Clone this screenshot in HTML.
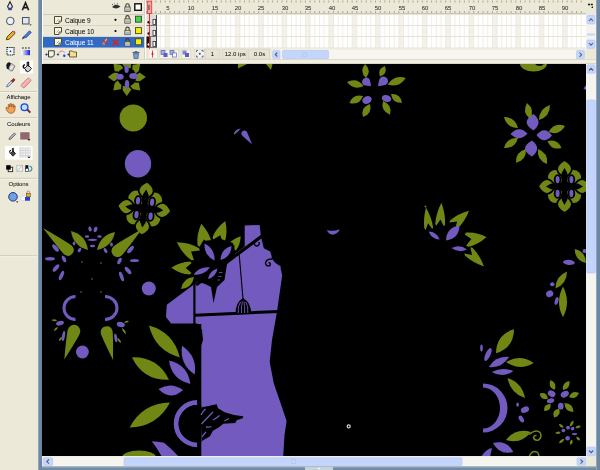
<!DOCTYPE html>
<html><head><meta charset="utf-8">
<style>
*{margin:0;padding:0;box-sizing:border-box}
.abs{will-change:transform}
html,body{width:600px;height:470px;overflow:hidden;background:#ECE9D8;font-family:"Liberation Sans",sans-serif;position:relative}
.abs{position:absolute}
#tools{left:0;top:0;width:38px;height:470px;background:#ECE9D8}
#vbarL{left:38px;top:0;width:4px;height:470px;background:#6B87A3;border-left:1px solid #8FA6BC}
#vbarR{left:596px;top:0;width:4px;height:470px;background:#6B87A3;border-left:1px solid #8FA6BC}
#tl{left:42px;top:0;width:554px;height:64px;background:#ECE9D8;border-left:1px solid #fff}
#stage{left:42px;top:64px;width:544px;height:392px;background:#000;overflow:hidden}
#vscroll{left:586px;top:64px;width:10px;height:392px;background:#F4F3EE}
#hscroll{left:42px;top:456px;width:554px;height:10px;background:#F4F3EE}
#bbar{left:42px;top:466px;width:554px;height:4px;background:#6B87A3}
.sep{height:1px;background:#C8C5B3;border-bottom:1px solid #fff}
.ln{font-size:6.6px;letter-spacing:-0.12px;line-height:10px;color:#000;white-space:nowrap}
.rn{top:4.5px;width:20px;text-align:center;font-size:6px;line-height:7px;color:#1a1a1a}
.tb{top:49px;height:10px;font-size:6px;line-height:10px;text-align:center;color:#000;white-space:nowrap}
.lbl{font-size:6px;letter-spacing:-0.12px;line-height:8px;color:#000;text-align:center;width:37px;left:0;white-space:nowrap}
</style></head><body>
<div class="abs" id="tools"></div>
<svg class="abs" style="left:0;top:0" width="38" height="470">
 <defs>
  <linearGradient id="gbl" x1="0" x2="1"><stop offset="0" stop-color="#fff"/><stop offset="1" stop-color="#1020D0"/></linearGradient>
  <pattern id="pgrid" width="2.5" height="2.5" patternUnits="userSpaceOnUse"><rect width="2.5" height="2.5" fill="#F4F4F4"/><path d="M0 0.5H2.5M0.5 0V2.5" stroke="#C9C9C9" stroke-width="0.6"/></pattern>
 </defs>
 <!-- row1 pen -->
 <path d="M10 1.8L12.4 6.5L11.6 8.3H8.4L7.6 6.5Z" fill="#E8E8F0" stroke="#1E1E2E" stroke-width="1.1"/>
 <rect x="8.2" y="8" width="3.6" height="2.2" fill="#3B3FA8"/>
 <!-- A -->
 <path d="M22.3 10.3L25.5 2.8L28.7 10.3M23.6 7.6H27.4" stroke="#1A1A1A" stroke-width="1.6" fill="none"/>
 <!-- oval -->
 <circle cx="10.3" cy="21" r="3.8" fill="#EAF0F8" stroke="#4A4F5A" stroke-width="1"/>
 <!-- rect -->
 <rect x="22.5" y="17.5" width="6.5" height="6.5" fill="#DCE8F6" stroke="#4A4F5A" stroke-width="1"/>
 <path d="M29.5 24.6H31.6L30.55 25.8Z" fill="#111"/>
 <!-- pencil -->
 <path d="M6.3 39.8L7 37L12.8 31.2L15 33.4L9.2 39.2Z" fill="#F0B526" stroke="#4A3208" stroke-width="0.9"/>
 <path d="M13 31.4L14 30.6L15.6 32.2L14.8 33.2Z" fill="#D9555A"/>
 <!-- brush -->
 <path d="M21.8 39.5L23 36.5L25 36.2L24.6 38.3Z" fill="#3B3B4A"/>
 <path d="M24.2 36.3L29.5 30.8L31.2 32.5L25.8 37.9Z" fill="#4B7EEA" stroke="#1E3A8A" stroke-width="0.8"/>
 <!-- free transform -->
 <rect x="7" y="47.5" width="7" height="7.5" fill="#EAF4FF" stroke="#111" stroke-width="1.1" stroke-dasharray="1.3 0.9"/>
 <circle cx="10.5" cy="51.2" r="0.8" fill="#111"/>
 <!-- fill transform -->
 <rect x="21.5" y="50" width="8.5" height="5.2" fill="url(#gbl)"/>
 <path d="M22 48H23.8M25 48H26.8M28 48H29.8" stroke="#222" stroke-width="1.2"/>
 <!-- ink bottle -->
 <path d="M6.3 65.5Q6.5 62.5 9.5 62.3L11 63.5L8.8 69.5L6.8 68.8Z" fill="#151515"/>
 <path d="M9 67L11.5 63.5L15 66L12.2 71Q10 71 9 69.5Z" fill="#D6D6D6" stroke="#5A5A5A" stroke-width="0.7"/>
 <path d="M10.5 68.5L12.2 66.5" stroke="#FFF" stroke-width="1"/>
 <!-- bucket selected -->
 <rect x="20" y="60.5" width="13" height="13" fill="#FFFFFF"/>
 <path d="M24.5 68.5L28 65L31.5 68.5L28 72Z" fill="#D0D0D0" stroke="#111" stroke-width="0.9"/>
 <path d="M27.2 66V62.5L28.6 62.2V66.5" stroke="#111" stroke-width="1.1" fill="none"/>
 <path d="M24.5 68.5C22.6 67 22.8 65.3 25 64.8" stroke="#111" stroke-width="1.5" fill="none"/>
 <path d="M25 70.5L28 72L31 69.5" stroke="#555" stroke-width="1" fill="none"/>
 <!-- eyedropper -->
 <path d="M6.6 87L7.3 84.7L11.8 80.2L13.3 81.7L8.8 86.2Z" fill="#BFD8F2" stroke="#3A5C8A" stroke-width="0.7"/>
 <path d="M11.2 80.8L13.6 78.4L15.1 79.9L12.7 82.3Z" fill="#B02828" stroke="#6E1010" stroke-width="0.6"/>
 <!-- eraser -->
 <path d="M21.6 84.4L27.4 78.6Q28.6 77.6 29.8 78.7L30.5 79.4Q31.4 80.6 30.4 81.6L24.6 87.4Q23.4 88.2 22.4 87.2L21.6 86.4Q20.8 85.4 21.6 84.4Z" fill="#F0A9AC" stroke="#C06D70" stroke-width="0.7"/>
 <path d="M22 86.5L30 78.5" stroke="#FFE0E0" stroke-width="0.6"/>
 <!-- separators -->
 <path d="M0 91.5H37" stroke="#CFCBB9" stroke-width="1"/><path d="M0 92.5H37" stroke="#FFFFFF" stroke-width="0.5"/>
 <path d="M0 117.7H37" stroke="#CFCBB9" stroke-width="1"/><path d="M0 118.7H37" stroke="#FFFFFF" stroke-width="0.5"/>
 <path d="M0 178.3H37" stroke="#CFCBB9" stroke-width="1"/><path d="M0 179.3H37" stroke="#FFFFFF" stroke-width="0.5"/>
 <path d="M0 255.7H37" stroke="#CFCBB9" stroke-width="1"/><path d="M0 256.7H37" stroke="#FFFFFF" stroke-width="0.5"/>
 <!-- hand -->
 <path d="M8 112Q5.5 109.5 6 107.5L7 107.3L8.3 108.7L8.2 104.8Q8.5 104 9.3 104.4L9.8 107L10.1 103.7Q10.9 103.1 11.5 103.8L11.7 107L12.5 104.2Q13.2 103.8 13.8 104.5L13.5 107.5L14.3 105.6Q15 105.4 15.3 106L14.8 110Q14.2 112.8 12 113.2H9.6Z" fill="#F3A352" stroke="#7A4010" stroke-width="0.6"/>
 <!-- zoom -->
 <path d="M27 109.3L30.3 112.6" stroke="#8E1E28" stroke-width="2"/>
 <circle cx="24.5" cy="107.3" r="3.4" fill="#B8DFFB" stroke="#1E46D0" stroke-width="1.3"/>
 <!-- stroke color -->
 <path d="M9 139.5L9.6 137.6L14.3 132.9L15.7 134.3L11 139Z" fill="#B8B8B8" stroke="#444" stroke-width="0.7"/>
 <rect x="19.5" y="131.5" width="10.8" height="8.8" fill="#F5F3EA"/>
 <rect x="20.2" y="132.2" width="9.4" height="7.4" fill="#8E6A6C"/>
 <path d="M27.5 139.3H30.5L29 140.8Z" fill="#000"/>
 <!-- fill area -->
 <rect x="5" y="146" width="27.5" height="13.6" fill="#FFFFFF"/>
 <path d="M10.5 153.5L13 151L15.6 153.5L13 156.2Z" fill="#444" stroke="#111" stroke-width="0.8"/>
 <path d="M12.4 151.5V148.5L13.4 148.2V152" stroke="#111" stroke-width="0.9" fill="none"/>
 <path d="M10.5 153.5C9.2 152 9.5 150.6 11 150.3" stroke="#111" stroke-width="1.1" fill="none"/>
 <rect x="19.5" y="147.5" width="11" height="10" fill="url(#pgrid)" stroke="#E5E5E5" stroke-width="0.6"/>
 <path d="M27.5 156.8H30.5L29 158.3Z" fill="#000"/>
 <!-- small icons -->
 <rect x="8.2" y="167.2" width="4.5" height="4.5" fill="#fff" stroke="#111" stroke-width="0.8"/>
 <rect x="6.2" y="165.2" width="4.5" height="4.5" fill="#000"/>
 <rect x="16.8" y="165.3" width="5.6" height="6" fill="#F2F2F2" stroke="#AFAFAF" stroke-width="0.7"/>
 <path d="M17 171.2L22.2 165.5" stroke="#AFAFAF" stroke-width="0.7"/>
 <rect x="25.3" y="165.2" width="3" height="3" fill="#111"/>
 <rect x="25.3" y="168.5" width="3" height="3" fill="#fff" stroke="#111" stroke-width="0.6"/>
 <path d="M29.5 166.3Q32.3 166.5 31.8 169.5Q31 171.6 28.8 171.2" stroke="#2488B8" stroke-width="1.1" fill="none"/>
 <!-- options -->
 <circle cx="13" cy="196.8" r="4.3" fill="#6FA0E6" stroke="#1F2F80" stroke-width="1"/>
 <path d="M16 201.5H18.4L17.2 202.8Z" fill="#000"/>
 <rect x="21" y="196" width="6.5" height="4.5" fill="#F8F8FF" stroke="#C8D0E8" stroke-width="0.6"/>
 <rect x="25" y="197" width="5" height="3.7" fill="#2340D0"/>
 <rect x="26.3" y="193.3" width="4" height="3.5" fill="#F2B020" stroke="#6A5020" stroke-width="0.6"/>
 <path d="M27 193.3V192.3A1.3 1.3 0 0 1 29.6 192.3V193.3" stroke="#777" stroke-width="0.7" fill="none"/>
</svg>
<div class="abs lbl" style="top:92.6px">Affichage</div>
<div class="abs lbl" style="top:120.2px">Couleurs</div>
<div class="abs lbl" style="top:180.2px">Options</div>

<div class="abs" id="vbarL"></div>
<div class="abs" id="tl"></div>

<!-- TIMELINE -->
<div class="abs" style="left:43px;top:0;width:101px;height:14px;background:#ECE9D8"></div>
<div class="abs" style="left:43px;top:14px;width:101px;height:1px;background:#CFCBB8"></div>
<div class="abs" style="left:43px;top:25px;width:101px;height:1px;background:#D9D5C3"></div>
<div class="abs" style="left:43px;top:36px;width:101px;height:1px;background:#D9D5C3"></div>
<div class="abs" style="left:43px;top:37px;width:101px;height:10.5px;background:#316AC5"></div>
<div class="abs" style="left:43px;top:47.5px;width:101px;height:1px;background:#D9D5C3"></div>
<div class="abs" style="left:144px;top:0;width:1px;height:61px;background:#D4D0BE"></div>
<div class="abs" style="left:145px;top:0;width:1px;height:61px;background:#fff"></div>
<!-- layer names -->
<svg class="abs" style="left:0;top:0" width="600" height="64">
 <defs>
  <g id="lic"><path d="M0.5 0.5H7.5V5L5 7.5H0.5Z" fill="#F7F5E3" stroke="#4B4A35" stroke-width="1"/><path d="M7.5 5H5V7.5" fill="#D8D4B0" stroke="#4B4A35" stroke-width="0.8"/><path d="M2.5 5.5L5 3" stroke="#9F9C7C" stroke-width="0.8"/></g>
  <g id="lock"><path d="M1.8 3.8V2.3A1.7 1.7 0 0 1 5.2 2.3V3.8" fill="none" stroke="#3A3A3A" stroke-width="1.1"/><rect x="0.8" y="3.8" width="5.4" height="4.4" fill="#E8D890" stroke="#4A4A4A" stroke-width="0.8"/><rect x="1.4" y="5.6" width="4.2" height="2.2" fill="#9DB4D8"/></g>
 </defs>
 <use href="#lic" x="54" y="16"/>
 <use href="#lic" x="54" y="27"/>
 <use href="#lic" x="54" y="38"/>
 <!-- eye -->
 <path d="M112 7Q116 3 120.5 6.5Q116 10 112 7Z" fill="#333"/><path d="M113 5L112 4M115 4.5L114.5 3.5M117.5 4.3L117.5 3.3" stroke="#333" stroke-width="0.8"/>
 <use href="#lock" x="124" y="3.2"/>
 <rect x="134.8" y="3.8" width="6.5" height="6.5" fill="#fff" stroke="#111" stroke-width="1.4"/>
 <circle cx="115.5" cy="19.8" r="1.1" fill="#000"/>
 <circle cx="115.5" cy="31" r="1.1" fill="#000"/>
 <use href="#lock" x="124" y="15"/>
 <use href="#lock" x="124" y="26.5"/>
 <use href="#lock" x="124" y="38"/>
 <rect x="135.5" y="16.2" width="6" height="6" fill="#44D544" stroke="#2F4A2F" stroke-width="0.9"/>
 <rect x="135.5" y="27.6" width="6" height="6" fill="#F4F000" stroke="#4A4A1F" stroke-width="0.9"/>
 <rect x="135.5" y="38.8" width="6" height="6" fill="#F4F000" stroke="#4A4A1F" stroke-width="0.9"/>
 <!-- pencil crossed -->
 <path d="M103 45L107 39" stroke="#E6C060" stroke-width="2"/><path d="M102.5 39.5L108 45M103 45L108 39" stroke="#E02020" stroke-width="1"/>
 <path d="M112.5 39.5L118.5 45.5M118.5 39.5L112.5 45.5" stroke="#E81818" stroke-width="1.4"/>
 <!-- bottom icons -->
 <path d="M48.5 50.8H54.3V55L52.5 57H48.5Z" fill="#F4F2E0" stroke="#3F3E2C" stroke-width="1"/><path d="M46.5 53.3L48 54.5L46.5 55.7L45 54.5Z" fill="#2838B0"/>
 <path d="M59 52.5Q61.5 49.8 64.5 52.3" stroke="#F02020" stroke-width="0.9" stroke-dasharray="0.9 0.5" fill="none"/><path d="M58 53.3L59.4 54.5L58 55.8L56.6 54.5Z" fill="#2838B0"/><circle cx="64.3" cy="55.8" r="1.2" fill="#1A3FE0"/>
 <path d="M69.5 51H72.5L73.5 52H76.5V57H69.5Z" fill="#F4DE8A" stroke="#5D5130" stroke-width="0.9"/><path d="M68.5 53.3L70 54.5L68.5 55.7L67 54.5Z" fill="#2838B0"/>
 <!-- trash -->
 <path d="M132.5 52.5H139.5" stroke="#4E6A8C" stroke-width="1.2"/><path d="M133.5 53.5H138.5L138 58.5H134Z" fill="#7F9CC3" stroke="#4E6A8C" stroke-width="0.8"/><rect x="134.8" y="51" width="2.4" height="1.2" fill="#4E6A8C"/>
 <!-- timeline ruler/grid -->
 <rect x="146" y="0" width="440" height="14" fill="#ECE9D8"/>
 <rect x="146" y="14" width="440" height="34.5" fill="#FFFFFF"/>
<rect x="165.16" y="14.5" width="4.67" height="33.5" fill="#F3F1E9"/>
<rect x="188.54" y="14.5" width="4.67" height="33.5" fill="#F3F1E9"/>
<rect x="211.91" y="14.5" width="4.67" height="33.5" fill="#F3F1E9"/>
<rect x="235.29" y="14.5" width="4.67" height="33.5" fill="#F3F1E9"/>
<rect x="258.66" y="14.5" width="4.67" height="33.5" fill="#F3F1E9"/>
<rect x="282.04" y="14.5" width="4.67" height="33.5" fill="#F3F1E9"/>
<rect x="305.41" y="14.5" width="4.67" height="33.5" fill="#F3F1E9"/>
<rect x="328.79" y="14.5" width="4.67" height="33.5" fill="#F3F1E9"/>
<rect x="352.16" y="14.5" width="4.67" height="33.5" fill="#F3F1E9"/>
<rect x="375.54" y="14.5" width="4.67" height="33.5" fill="#F3F1E9"/>
<rect x="398.91" y="14.5" width="4.67" height="33.5" fill="#F3F1E9"/>
<rect x="422.29" y="14.5" width="4.67" height="33.5" fill="#F3F1E9"/>
<rect x="445.66" y="14.5" width="4.67" height="33.5" fill="#F3F1E9"/>
<rect x="469.04" y="14.5" width="4.67" height="33.5" fill="#F3F1E9"/>
<rect x="492.41" y="14.5" width="4.67" height="33.5" fill="#F3F1E9"/>
<rect x="515.79" y="14.5" width="4.67" height="33.5" fill="#F3F1E9"/>
<rect x="539.16" y="14.5" width="4.67" height="33.5" fill="#F3F1E9"/>
<rect x="562.54" y="14.5" width="4.67" height="33.5" fill="#F3F1E9"/>
<path d="M151.14 14.5V48M155.81 14.5V48M160.49 14.5V48M165.16 14.5V48M169.84 14.5V48M174.51 14.5V48M179.19 14.5V48M183.86 14.5V48M188.54 14.5V48M193.21 14.5V48M197.89 14.5V48M202.56 14.5V48M207.24 14.5V48M211.91 14.5V48M216.59 14.5V48M221.26 14.5V48M225.94 14.5V48M230.61 14.5V48M235.29 14.5V48M239.96 14.5V48M244.64 14.5V48M249.31 14.5V48M253.99 14.5V48M258.66 14.5V48M263.34 14.5V48M268.01 14.5V48M272.69 14.5V48M277.36 14.5V48M282.04 14.5V48M286.71 14.5V48M291.39 14.5V48M296.06 14.5V48M300.74 14.5V48M305.41 14.5V48M310.09 14.5V48M314.76 14.5V48M319.44 14.5V48M324.11 14.5V48M328.79 14.5V48M333.46 14.5V48M338.14 14.5V48M342.81 14.5V48M347.49 14.5V48M352.16 14.5V48M356.84 14.5V48M361.51 14.5V48M366.19 14.5V48M370.86 14.5V48M375.54 14.5V48M380.21 14.5V48M384.89 14.5V48M389.56 14.5V48M394.24 14.5V48M398.91 14.5V48M403.59 14.5V48M408.26 14.5V48M412.94 14.5V48M417.61 14.5V48M422.29 14.5V48M426.96 14.5V48M431.64 14.5V48M436.31 14.5V48M440.99 14.5V48M445.66 14.5V48M450.34 14.5V48M455.01 14.5V48M459.69 14.5V48M464.36 14.5V48M469.04 14.5V48M473.71 14.5V48M478.39 14.5V48M483.06 14.5V48M487.74 14.5V48M492.41 14.5V48M497.09 14.5V48M501.76 14.5V48M506.44 14.5V48M511.11 14.5V48M515.79 14.5V48M520.46 14.5V48M525.14 14.5V48M529.81 14.5V48M534.49 14.5V48M539.16 14.5V48M543.84 14.5V48M548.51 14.5V48M553.19 14.5V48M557.86 14.5V48M562.54 14.5V48M567.21 14.5V48M571.89 14.5V48M576.56 14.5V48M581.24 14.5V48" stroke="#E9E7DA" stroke-width="0.7" fill="none"/>
<path d="M146.46 0.5V2.5M146.46 11V13M151.14 0.5V2.5M151.14 11V13M155.81 0.5V2.5M155.81 11V13M160.49 0.5V2.5M160.49 11V13M165.16 0.5V2.5M165.16 11V13M169.84 0.5V2.5M169.84 11V13M174.51 0.5V2.5M174.51 11V13M179.19 0.5V2.5M179.19 11V13M183.86 0.5V2.5M183.86 11V13M188.54 0.5V2.5M188.54 11V13M193.21 0.5V2.5M193.21 11V13M197.89 0.5V2.5M197.89 11V13M202.56 0.5V2.5M202.56 11V13M207.24 0.5V2.5M207.24 11V13M211.91 0.5V2.5M211.91 11V13M216.59 0.5V2.5M216.59 11V13M221.26 0.5V2.5M221.26 11V13M225.94 0.5V2.5M225.94 11V13M230.61 0.5V2.5M230.61 11V13M235.29 0.5V2.5M235.29 11V13M239.96 0.5V2.5M239.96 11V13M244.64 0.5V2.5M244.64 11V13M249.31 0.5V2.5M249.31 11V13M253.99 0.5V2.5M253.99 11V13M258.66 0.5V2.5M258.66 11V13M263.34 0.5V2.5M263.34 11V13M268.01 0.5V2.5M268.01 11V13M272.69 0.5V2.5M272.69 11V13M277.36 0.5V2.5M277.36 11V13M282.04 0.5V2.5M282.04 11V13M286.71 0.5V2.5M286.71 11V13M291.39 0.5V2.5M291.39 11V13M296.06 0.5V2.5M296.06 11V13M300.74 0.5V2.5M300.74 11V13M305.41 0.5V2.5M305.41 11V13M310.09 0.5V2.5M310.09 11V13M314.76 0.5V2.5M314.76 11V13M319.44 0.5V2.5M319.44 11V13M324.11 0.5V2.5M324.11 11V13M328.79 0.5V2.5M328.79 11V13M333.46 0.5V2.5M333.46 11V13M338.14 0.5V2.5M338.14 11V13M342.81 0.5V2.5M342.81 11V13M347.49 0.5V2.5M347.49 11V13M352.16 0.5V2.5M352.16 11V13M356.84 0.5V2.5M356.84 11V13M361.51 0.5V2.5M361.51 11V13M366.19 0.5V2.5M366.19 11V13M370.86 0.5V2.5M370.86 11V13M375.54 0.5V2.5M375.54 11V13M380.21 0.5V2.5M380.21 11V13M384.89 0.5V2.5M384.89 11V13M389.56 0.5V2.5M389.56 11V13M394.24 0.5V2.5M394.24 11V13M398.91 0.5V2.5M398.91 11V13M403.59 0.5V2.5M403.59 11V13M408.26 0.5V2.5M408.26 11V13M412.94 0.5V2.5M412.94 11V13M417.61 0.5V2.5M417.61 11V13M422.29 0.5V2.5M422.29 11V13M426.96 0.5V2.5M426.96 11V13M431.64 0.5V2.5M431.64 11V13M436.31 0.5V2.5M436.31 11V13M440.99 0.5V2.5M440.99 11V13M445.66 0.5V2.5M445.66 11V13M450.34 0.5V2.5M450.34 11V13M455.01 0.5V2.5M455.01 11V13M459.69 0.5V2.5M459.69 11V13M464.36 0.5V2.5M464.36 11V13M469.04 0.5V2.5M469.04 11V13M473.71 0.5V2.5M473.71 11V13M478.39 0.5V2.5M478.39 11V13M483.06 0.5V2.5M483.06 11V13M487.74 0.5V2.5M487.74 11V13M492.41 0.5V2.5M492.41 11V13M497.09 0.5V2.5M497.09 11V13M501.76 0.5V2.5M501.76 11V13M506.44 0.5V2.5M506.44 11V13M511.11 0.5V2.5M511.11 11V13M515.79 0.5V2.5M515.79 11V13M520.46 0.5V2.5M520.46 11V13M525.14 0.5V2.5M525.14 11V13M529.81 0.5V2.5M529.81 11V13M534.49 0.5V2.5M534.49 11V13M539.16 0.5V2.5M539.16 11V13M543.84 0.5V2.5M543.84 11V13M548.51 0.5V2.5M548.51 11V13M553.19 0.5V2.5M553.19 11V13M557.86 0.5V2.5M557.86 11V13M562.54 0.5V2.5M562.54 11V13M567.21 0.5V2.5M567.21 11V13M571.89 0.5V2.5M571.89 11V13M576.56 0.5V2.5M576.56 11V13M581.24 0.5V2.5M581.24 11V13" stroke="#A9A693" stroke-width="1" fill="none"/>
 <path d="M146 14.5H586M146 25.5H586M146 36.5H586M146 48H586" stroke="#E6E3D4" stroke-width="1"/>
 <path d="M146 13.5H586" stroke="#C9C6B2" stroke-width="1"/>
 <!-- frame 1 cells -->
 <rect x="146.5" y="15" width="10" height="10.5" fill="#DCDCDC"/>
 <rect x="146.5" y="26" width="10" height="10.5" fill="#DCDCDC"/>
 <rect x="146.5" y="37" width="10" height="10.5" fill="#DCDCDC"/>
 <rect x="146.5" y="37" width="4" height="10.5" fill="#111"/>
 <path d="M156.5 15V47.5" stroke="#333" stroke-width="0.9"/>
 <path d="M146.5 25.5H156.5M146.5 36.5H156.5M146.5 47.5H156.5" stroke="#555" stroke-width="0.8"/>
 <rect x="153" y="19.5" width="2.6" height="5" fill="#fff" stroke="#333" stroke-width="0.8"/>
 <rect x="153" y="30.5" width="2.6" height="5" fill="#fff" stroke="#333" stroke-width="0.8"/>
 <rect x="153" y="41.5" width="2.6" height="5" fill="#fff" stroke="#333" stroke-width="0.8"/>
 <circle cx="148.8" cy="22.3" r="1.3" fill="#000"/>
 <circle cx="148.8" cy="33.5" r="1.3" fill="#000"/>
 <circle cx="148.8" cy="44.5" r="1.3" fill="#fff"/>
 <!-- playhead -->
 <rect x="147.3" y="1.2" width="4.4" height="12.3" fill="#F7A3A3" stroke="#E23B3B" stroke-width="0.9"/>
 <path d="M149.5 13.5V49.5" stroke="#E81A1A" stroke-width="0.9"/>
 <path d="M149 5V10" stroke="#333" stroke-width="0.9"/>
 <!-- timeline right scrollbar -->
 <rect x="586" y="14" width="10" height="35" fill="#F4F3EE"/>
 <rect x="587" y="15" width="8" height="9" rx="1" fill="#C6D6FA" stroke="#B2C6F2" stroke-width="0.6"/>
 <path d="M589 21L591 18.8L593 21" stroke="#4D6185" stroke-width="1.1" fill="none"/>
 <rect x="587" y="33.5" width="8" height="2" fill="#C6D6FA"/>
 <rect x="587" y="40" width="8" height="8.5" rx="1" fill="#C6D6FA" stroke="#B2C6F2" stroke-width="0.6"/>
 <path d="M589 43L591 45.2L593 43" stroke="#4D6185" stroke-width="1.1" fill="none"/>
 <!-- frame-rate icon top right -->
 <path d="M588 4.5H590M590.8 4.5H592.8" stroke="#111" stroke-width="1.3"/><path d="M593 8L591 8L593 6Z" fill="#111"/>
 <!-- bottom bar buttons -->
 <rect x="148" y="49" width="9.5" height="9.5" fill="#F6F5EF" stroke="#D6D2C0" stroke-width="0.6"/>
 <rect x="159.8" y="49.2" width="19" height="9.3" fill="#F3F2EB" stroke="#D6D2C0" stroke-width="0.6"/>
 <rect x="181.2" y="49.2" width="9.6" height="9.3" fill="#F3F2EB" stroke="#D6D2C0" stroke-width="0.6"/>
 <rect x="194.8" y="49.2" width="9.6" height="9.3" fill="#F3F2EB" stroke="#D6D2C0" stroke-width="0.6"/>
 <path d="M152.5 50.5V57.5" stroke="#E81A1A" stroke-width="0.8"/><path d="M152.5 52.3L153.7 54L152.5 55.7L151.3 54Z" fill="#E81A1A"/>
 <rect x="161" y="50.5" width="4" height="4" fill="#A8ACE0" stroke="#5B60B8" stroke-width="0.7"/><rect x="163.5" y="53" width="4" height="4" fill="#5B60B8"/>
 <rect x="170" y="50.5" width="4" height="4" fill="#A8ACE0" stroke="#5B60B8" stroke-width="0.7"/><rect x="172.5" y="53" width="4" height="4" fill="#fff" stroke="#5B60B8" stroke-width="0.7"/>
 <rect x="182.5" y="50.5" width="4" height="4" fill="#7E84D2"/><rect x="185" y="53" width="4" height="4" fill="#5B60B8"/>
 <path d="M196.5 52V50.5H198M201.5 50.5H203V52M203 55.5V57H201.5M198 57H196.5V55.5" stroke="#4C5190" stroke-width="0.9" fill="none"/><circle cx="199.8" cy="53.8" r="1" fill="#4C5190"/>
 <rect x="205" y="49" width="15" height="10" fill="#E7E4D5" stroke="#D2CEBB" stroke-width="0.6"/>
 <rect x="222.5" y="49" width="24.5" height="10" fill="#E7E4D5" stroke="#D2CEBB" stroke-width="0.6"/>
 <rect x="248.7" y="49" width="21" height="10" fill="#E7E4D5" stroke="#D2CEBB" stroke-width="0.6"/>
 <!-- h scroll -->
 <rect x="271.5" y="49.5" width="314" height="10" fill="#F6F5F0"/>
 <rect x="272.5" y="50.5" width="7.5" height="8" rx="1" fill="#C6D6FA" stroke="#B2C6F2" stroke-width="0.6"/>
 <path d="M277.3 52.5L275.3 54.5L277.3 56.5" stroke="#4D6185" stroke-width="1.1" fill="none"/>
 <rect x="282.5" y="50.5" width="46" height="8" rx="1" fill="#C3D5FC" stroke="#B0C5F5" stroke-width="0.6"/>
 <rect x="303" y="52.8" width="3.5" height="3.5" fill="none" stroke="#AFC3EE" stroke-width="0.6"/>
 <rect x="576.5" y="50.5" width="8" height="8.5" rx="1" fill="#C6D6FA" stroke="#B2C6F2" stroke-width="0.6"/>
 <path d="M579.5 52.5L581.5 54.7L579.5 57" stroke="#4D6185" stroke-width="1.1" fill="none"/>
 <path d="M43 48H144" stroke="#F8F7F0" stroke-width="0.8"/><path d="M43 59.6H596" stroke="#DCD8C6" stroke-width="1"/><rect x="43" y="60.2" width="553" height="2.8" fill="#F1EFE3"/>
 <path d="M43 63.5H596" stroke="#D9D5C2" stroke-width="1"/>
</svg>
<div class="abs ln" style="left:65px;top:15.5px">Calque 9</div>
<div class="abs ln" style="left:65px;top:26.5px">Calque 10</div>
<div class="abs ln" style="left:65px;top:37.5px;color:#fff">Calque 11</div>
<div class="abs rn" style="left:157.9px">5</div>
<div class="abs rn" style="left:181.3px">10</div>
<div class="abs rn" style="left:204.6px">15</div>
<div class="abs rn" style="left:228.0px">20</div>
<div class="abs rn" style="left:251.4px">25</div>
<div class="abs rn" style="left:274.8px">30</div>
<div class="abs rn" style="left:298.2px">35</div>
<div class="abs rn" style="left:321.5px">40</div>
<div class="abs rn" style="left:344.9px">45</div>
<div class="abs rn" style="left:368.3px">50</div>
<div class="abs rn" style="left:391.7px">55</div>
<div class="abs rn" style="left:415.0px">60</div>
<div class="abs rn" style="left:438.4px">65</div>
<div class="abs rn" style="left:461.8px">70</div>
<div class="abs rn" style="left:485.2px">75</div>
<div class="abs rn" style="left:508.5px">80</div>
<div class="abs rn" style="left:531.9px">85</div>
<div class="abs rn" style="left:555.3px">90</div>
<div class="abs tb" style="left:205px;width:15px">1</div>
<div class="abs tb" style="left:222.5px;width:24.5px">12.0 ips</div>
<div class="abs tb" style="left:248.7px;width:21px">0.0s</div>

<div class="abs" id="stage"></div>
<!--ART--><svg class="abs" style="left:0;top:0" width="600" height="470" viewBox="0 0 600 470"><defs><clipPath id="stc"><rect x="42" y="64" width="544" height="392"/></clipPath></defs><g clip-path="url(#stc)"><path d="M145.8 77.0 L138.8 82.0 L140.2 90.4 L131.8 89.0 L126.8 96.0 L121.8 89.0 L113.4 90.4 L114.8 82.0 L107.8 77.0 L114.8 72.0 L113.4 63.6 L121.8 65.0 L126.8 58.0 L131.8 65.0 L140.2 63.6 L138.8 72.0Z" fill="#718715"/><circle cx="126.8" cy="77" r="9.5" fill="#000"/><path d="M133.4 81.5L140.9 82.2" stroke="#000" stroke-width="1.6"/><path d="M128.3 84.9L133.1 90.6" stroke="#000" stroke-width="1.6"/><path d="M122.3 83.6L121.6 91.1" stroke="#000" stroke-width="1.6"/><path d="M118.9 78.5L113.2 83.3" stroke="#000" stroke-width="1.6"/><path d="M120.2 72.5L112.7 71.8" stroke="#000" stroke-width="1.6"/><path d="M125.3 69.1L120.5 63.4" stroke="#000" stroke-width="1.6"/><path d="M131.3 70.4L132.0 62.9" stroke="#000" stroke-width="1.6"/><path d="M134.7 75.5L140.4 70.7" stroke="#000" stroke-width="1.6"/><ellipse cx="126.6" cy="69.0" rx="2.2" ry="3.9" transform="rotate(0 126.6 69.0)" fill="#735ABF"/><ellipse cx="119.8" cy="76.7" rx="3.9" ry="3.0" transform="rotate(0 119.8 76.7)" fill="#735ABF"/><ellipse cx="133.6" cy="76.0" rx="4.4" ry="3.0" transform="rotate(0 133.6 76.0)" fill="#735ABF"/><ellipse cx="127.0" cy="84.3" rx="2.2" ry="4.4" transform="rotate(0 127.0 84.3)" fill="#735ABF"/><ellipse cx="133.3" cy="117.9" rx="13.7" ry="13.5" transform="rotate(0 133.3 117.9)" fill="#718715"/><ellipse cx="138.0" cy="163.8" rx="13.2" ry="13.7" transform="rotate(0 138.0 163.8)" fill="#735ABF"/><circle cx="154.4" cy="200.3" r="7.8" fill="#718715"/><circle cx="152.5" cy="218.6" r="7.8" fill="#718715"/><circle cx="134.2" cy="216.7" r="7.8" fill="#718715"/><circle cx="136.1" cy="198.4" r="7.8" fill="#718715"/><path d="M145.2 199.5Q161.1 192.2 147.1 181.6Q131.3 189.0 145.2 199.5Z" fill="#718715" stroke="#000" stroke-width="1.8"/><path d="M153.3 209.4Q160.6 225.3 171.2 211.3Q163.8 195.5 153.3 209.4Z" fill="#718715" stroke="#000" stroke-width="1.8"/><path d="M143.4 217.5Q127.5 224.8 141.5 235.4Q157.3 228.0 143.4 217.5Z" fill="#718715" stroke="#000" stroke-width="1.8"/><path d="M135.3 207.6Q128.0 191.7 117.4 205.7Q124.8 221.5 135.3 207.6Z" fill="#718715" stroke="#000" stroke-width="1.8"/><path d="M144.3 208.5Q152.3 199.8 146.3 189.6Q138.3 198.3 144.3 208.5Z" fill="#000"/><path d="M144.3 208.5Q153.0 216.5 163.2 210.5Q154.5 202.5 144.3 208.5Z" fill="#000"/><path d="M144.3 208.5Q136.3 217.2 142.3 227.4Q150.3 218.7 144.3 208.5Z" fill="#000"/><path d="M144.3 208.5Q135.6 200.5 125.4 206.5Q134.1 214.5 144.3 208.5Z" fill="#000"/><circle cx="144.3" cy="208.5" r="5.5" fill="#000"/><ellipse cx="152.1" cy="202.2" rx="3.0" ry="4.6" transform="rotate(6 152.1 202.2)" fill="#735ABF" stroke="#000" stroke-width="1.8"/><ellipse cx="150.6" cy="216.3" rx="3.0" ry="4.6" transform="rotate(6 150.6 216.3)" fill="#735ABF" stroke="#000" stroke-width="1.8"/><ellipse cx="136.5" cy="214.8" rx="3.0" ry="4.6" transform="rotate(6 136.5 214.8)" fill="#735ABF" stroke="#000" stroke-width="1.8"/><ellipse cx="138.0" cy="200.7" rx="3.0" ry="4.6" transform="rotate(6 138.0 200.7)" fill="#735ABF" stroke="#000" stroke-width="1.8"/><circle cx="573.5" cy="177.5" r="7.6" fill="#718715"/><circle cx="573.5" cy="195.5" r="7.6" fill="#718715"/><circle cx="555.5" cy="195.5" r="7.6" fill="#718715"/><circle cx="555.5" cy="177.5" r="7.6" fill="#718715"/><path d="M564.5 177.7Q579.2 168.9 564.5 160.0Q549.8 168.9 564.5 177.7Z" fill="#718715" stroke="#000" stroke-width="1.8"/><path d="M573.3 186.5Q582.1 201.2 591.0 186.5Q582.1 171.8 573.3 186.5Z" fill="#718715" stroke="#000" stroke-width="1.8"/><path d="M564.5 195.3Q549.8 204.1 564.5 213.0Q579.2 204.1 564.5 195.3Z" fill="#718715" stroke="#000" stroke-width="1.8"/><path d="M555.7 186.5Q546.9 171.8 538.0 186.5Q546.9 201.2 555.7 186.5Z" fill="#718715" stroke="#000" stroke-width="1.8"/><path d="M564.5 186.5Q571.4 177.2 564.5 167.9Q557.6 177.2 564.5 186.5Z" fill="#000"/><path d="M564.5 186.5Q573.8 193.4 583.1 186.5Q573.8 179.6 564.5 186.5Z" fill="#000"/><path d="M564.5 186.5Q557.6 195.8 564.5 205.1Q571.4 195.8 564.5 186.5Z" fill="#000"/><path d="M564.5 186.5Q555.2 179.6 545.9 186.5Q555.2 193.4 564.5 186.5Z" fill="#000"/><circle cx="564.5" cy="186.5" r="5.4" fill="#000"/><ellipse cx="571.4" cy="179.6" rx="2.9" ry="4.5" transform="rotate(0 571.4 179.6)" fill="#735ABF" stroke="#000" stroke-width="1.8"/><ellipse cx="571.4" cy="193.4" rx="2.9" ry="4.5" transform="rotate(0 571.4 193.4)" fill="#735ABF" stroke="#000" stroke-width="1.8"/><ellipse cx="557.6" cy="193.4" rx="2.9" ry="4.5" transform="rotate(0 557.6 193.4)" fill="#735ABF" stroke="#000" stroke-width="1.8"/><ellipse cx="557.6" cy="179.6" rx="2.9" ry="4.5" transform="rotate(0 557.6 179.6)" fill="#735ABF" stroke="#000" stroke-width="1.8"/><path d="M43.0 228.0Q63.0 254.1 64.7 254.8A5.8 5.8 0 0 0 72.3 246.2Q71.4 244.6 43.0 228.0Z" fill="#718715"/><path d="M71.0 231.0Q73.2 246.2 88.0 250.0Q85.8 234.8 71.0 231.0Z" fill="#718715"/><path d="M115.0 232.0Q100.0 235.0 97.0 250.0Q112.0 247.0 115.0 232.0Z" fill="#718715"/><path d="M142.0 229.0Q114.4 244.9 113.5 246.5A6.0 6.0 0 0 0 121.5 255.5Q123.2 254.7 142.0 229.0Z" fill="#718715"/><ellipse cx="50.0" cy="258.8" rx="5.0" ry="1.8" transform="rotate(0 50.0 258.8)" fill="#735ABF"/><ellipse cx="55.5" cy="248.0" rx="2.0" ry="4.5" transform="rotate(-40 55.5 248.0)" fill="#735ABF"/><ellipse cx="56.0" cy="268.0" rx="2.0" ry="4.5" transform="rotate(40 56.0 268.0)" fill="#735ABF"/><ellipse cx="61.5" cy="275.5" rx="1.8" ry="5.0" transform="rotate(25 61.5 275.5)" fill="#735ABF"/><ellipse cx="64.0" cy="259.0" rx="1.8" ry="3.5" transform="rotate(-25 64.0 259.0)" fill="#735ABF"/><ellipse cx="74.0" cy="243.5" rx="1.3" ry="2.0" transform="rotate(0 74.0 243.5)" fill="#735ABF"/><ellipse cx="79.5" cy="250.0" rx="1.5" ry="2.5" transform="rotate(30 79.5 250.0)" fill="#735ABF"/><ellipse cx="90.0" cy="229.0" rx="1.6" ry="2.6" transform="rotate(-15 90.0 229.0)" fill="#735ABF"/><ellipse cx="95.5" cy="229.5" rx="1.8" ry="2.8" transform="rotate(20 95.5 229.5)" fill="#735ABF"/><ellipse cx="87.0" cy="236.5" rx="2.2" ry="1.3" transform="rotate(0 87.0 236.5)" fill="#735ABF"/><ellipse cx="99.5" cy="236.5" rx="2.2" ry="1.3" transform="rotate(0 99.5 236.5)" fill="#735ABF"/><path d="M87 240Q92.5 237.5 98 240Q92.5 242 87 240Z" fill="#735ABF"/><ellipse cx="92.5" cy="246.0" rx="2.6" ry="1.2" transform="rotate(0 92.5 246.0)" fill="#735ABF"/><ellipse cx="105.5" cy="250.5" rx="1.5" ry="2.8" transform="rotate(-30 105.5 250.5)" fill="#735ABF"/><ellipse cx="111.5" cy="244.5" rx="1.4" ry="2.0" transform="rotate(0 111.5 244.5)" fill="#735ABF"/><ellipse cx="119.5" cy="261.0" rx="1.8" ry="3.5" transform="rotate(25 119.5 261.0)" fill="#735ABF"/><ellipse cx="130.5" cy="249.5" rx="2.0" ry="4.5" transform="rotate(40 130.5 249.5)" fill="#735ABF"/><ellipse cx="134.5" cy="260.5" rx="4.5" ry="1.5" transform="rotate(0 134.5 260.5)" fill="#735ABF"/><ellipse cx="128.0" cy="270.5" rx="2.0" ry="4.5" transform="rotate(-40 128.0 270.5)" fill="#735ABF"/><ellipse cx="121.5" cy="276.5" rx="1.8" ry="5.0" transform="rotate(-20 121.5 276.5)" fill="#735ABF"/><circle cx="82" cy="262" r="0.8" fill="#718715"/><circle cx="101" cy="263" r="0.8" fill="#718715"/><circle cx="92" cy="279" r="0.8" fill="#718715"/><circle cx="81" cy="292" r="0.8" fill="#718715"/><circle cx="101" cy="292" r="0.8" fill="#718715"/><path d="M75.5 296.5A11.5 11.5 0 0 0 75.5 319.5" stroke="#735ABF" stroke-width="3" fill="none"/><path d="M105 296.5A12 11.5 0 0 1 105 319.5" stroke="#735ABF" stroke-width="3" fill="none"/><path d="M64.3 359.5Q79.9 335.0 79.9 333.0A6.2 6.2 0 0 0 68.1 329.0Q66.9 330.6 64.3 359.5Z" fill="#718715"/><path d="M113.0 360.0Q113.3 331.8 112.3 330.2A6.0 6.0 0 0 0 100.7 332.8Q100.5 334.7 113.0 360.0Z" fill="#718715"/><circle cx="82.4" cy="352" r="6.4" fill="#735ABF"/><circle cx="148.8" cy="288.5" r="7" fill="#735ABF"/><ellipse cx="60.0" cy="323.2" rx="4.0" ry="2.2" transform="rotate(-15 60.0 323.2)" fill="#735ABF"/><ellipse cx="63.5" cy="336.0" rx="1.5" ry="5.0" transform="rotate(10 63.5 336.0)" fill="#735ABF"/><ellipse cx="120.8" cy="324.5" rx="4.2" ry="2.5" transform="rotate(15 120.8 324.5)" fill="#735ABF"/><ellipse cx="115.8" cy="338.0" rx="1.5" ry="4.2" transform="rotate(-10 115.8 338.0)" fill="#735ABF"/><path d="M51.6 320.0Q54.1 322.4 57.0 320.5Q54.5 318.1 51.6 320.0Z" fill="#718715"/><path d="M53.7 331.0Q57.2 330.5 58.0 327.0Q54.5 327.5 53.7 331.0Z" fill="#718715"/><path d="M59.0 341.0Q62.1 340.2 62.0 337.0Q58.9 337.8 59.0 341.0Z" fill="#718715"/><path d="M124.0 322.5Q127.1 323.7 129.0 321.0Q125.9 319.8 124.0 322.5Z" fill="#718715"/><path d="M122.0 328.0Q122.3 332.1 126.0 334.0Q125.7 329.9 122.0 328.0Z" fill="#718715"/><path d="M117.5 338.0Q117.6 341.6 121.0 343.0Q120.9 339.4 117.5 338.0Z" fill="#718715"/><path d="M149.0 325.5Q155.0 350.5 179.8 357.4Q173.8 332.4 149.0 325.5Z" fill="#718715"/><path d="M132.0 357.4Q143.2 380.6 169.0 379.8Q157.8 356.6 132.0 357.4Z" fill="#718715"/><path d="M182.0 345.7Q179.2 364.1 194.7 374.5Q197.5 356.1 182.0 345.7Z" fill="#735ABF"/><path d="M169.0 360.6Q171.6 379.7 190.4 384.0Q187.8 364.9 169.0 360.6Z" fill="#735ABF"/><path d="M158.5 389.0Q170.3 401.5 183.0 390.0Q171.1 381.5 158.5 389.0Z" fill="#735ABF"/><path d="M129.7 427.5Q157.2 427.0 170.0 402.6Q142.5 403.1 129.7 427.5Z" fill="#718715"/><path d="M151.8 441.3Q158 441.5 164 442.7Q172 449 179 457H162Q157 448 151.8 441.3Z" fill="#735ABF"/><ellipse cx="139" cy="457" rx="17" ry="6.5" fill="#718715"/><path d="M101.0 325.5Q107.3 342.6 113.8 359.6Q107.5 342.5 101.0 325.5Z" fill="#718715"/><path d="M166.8 304.7L244.7 246.5L244.7 225.5L259.6 225L261 237L263.8 248.3L270.2 251.5L271.3 254.7L272 259L275.5 263L280.9 266.4L280.5 267.7L282.2 275.3L277.1 311L272 340L269.7 362L273.8 383.6L279.5 400L286.6 421L284.5 435L283.2 456.5L201 456.5L201 346L203 340L202 330L197.5 323.5L171 323.5L166 317Z" fill="#735ABF"/><path d="M166 307L246 247" stroke="#000" stroke-width="0" fill="none"/><path d="M196 285L262 236" stroke="#000" stroke-width="3.2" fill="none"/><path d="M194.4 282V324" stroke="#000" stroke-width="2.2" fill="none"/><path d="M195 315.2L279 311.5" stroke="#000" stroke-width="3" fill="none"/><path d="M238 64L247 64L238 68.5Z" fill="#718715"/><path d="M266 64L272.5 64L271 70Z" fill="#718715"/><path d="M257 239Q252 243 256 246Q260 246 259 242" stroke="#000" stroke-width="1.4" fill="none"/><path d="M272 259Q266 259 265.5 263Q266 267 270 265.5Q271 263 268.5 262.5" stroke="#000" stroke-width="1.4" fill="none"/><path d="M239 252L243 299" stroke="#000" stroke-width="1.1" fill="none"/><path d="M235.8 313.5Q235 303 243 298Q251.5 303 251 313.5Z" fill="#000"/><path d="M238.3 313Q237.5 306 240.5 302M241.6 313Q241 306 242.4 301.5M244.6 313Q245 306 244 301.5M247.8 313Q248.5 306 245.8 302" stroke="#735ABF" stroke-width="0.9" fill="none"/><path d="M201.3 223.7Q209.7 232.8 211.7 242.9L210.4 245.0L203.9 239.5L199.5 246.7L197.6 245.2Q196.2 235.0 201.3 223.7Z" fill="#718715"/><path d="M225.3 221.0Q227.9 232.3 224.9 241.7L223.0 242.8L220.2 235.3L213.3 239.4L212.5 237.2Q216.1 228.1 225.3 221.0Z" fill="#718715"/><path d="M240.7 236.3Q240.3 244.6 236.3 250.1L234.7 250.4L234.3 244.7L228.6 245.7L228.5 244.1Q232.8 238.8 240.7 236.3Z" fill="#718715"/><path d="M176.7 242.3Q189.7 242.5 199.1 248.2L199.9 250.6L191.1 251.5L193.9 259.9L191.4 260.2Q182.3 254.0 176.7 242.3Z" fill="#718715"/><path d="M171.3 267.7Q180.7 261.5 190.0 261.4L191.7 262.9L185.8 267.9L191.5 273.1L189.8 274.6Q180.5 274.1 171.3 267.7Z" fill="#718715"/><path d="M181.0 289.0Q192.2 288.1 194.0 277.0Q182.8 277.9 181.0 289.0Z" fill="#718715"/><path d="M203 241L221 239L233 243L235 256L227 264L224.5 280L217 287L213.5 303L211 287L205 284L196 281L194 266L203 262Z" fill="#000"/><path d="M219 272.5H222.5M218.5 276.5H221.5M217.5 280H220" stroke="#735ABF" stroke-width="0.8"/><path d="M204.5 243.5Q203.9 255.3 214.5 260.5Q215.1 248.7 204.5 243.5Z" fill="#735ABF"/><path d="M231.5 246.0Q220.9 249.0 220.5 260.0Q231.1 257.0 231.5 246.0Z" fill="#735ABF"/><path d="M193.5 274.5Q203.7 275.6 210.0 267.5Q199.8 266.4 193.5 274.5Z" fill="#735ABF"/><path d="M217.5 268.5Q209.4 270.7 208.0 279.0Q216.1 276.8 217.5 268.5Z" fill="#735ABF"/><path d="M197.3 402.5A21 21 0 0 0 197.3 444.8" stroke="#735ABF" stroke-width="4.8" fill="none"/><path d="M197.3 405A18.6 18.6 0 0 0 197.3 442.3H201.3V405Z" fill="#000"/><path d="M199.3 324V456.5" stroke="#000" stroke-width="4"/><path d="M200 407.7L216.7 404.3L218 408.3L224.7 412.3L234 415L243.3 416.3L242.7 418.3L236.7 420.3L235.3 423L223.3 423.7L219.3 427L212.7 431L210 436.3L202 441Z" fill="#000"/><path d="M201 415Q203 411 205.5 409M201.5 424Q207 418 213 412M213 420Q217 418 219.5 415.5M206 427Q209 427.5 211.5 426.5M224.5 421Q227 419.5 229 418.5M202 437Q204 434 206 432" stroke="#735ABF" stroke-width="1.3" fill="none"/><path d="M234 133Q236 129 240.7 128.8Q238 132 234 134.7Z" fill="#735ABF"/><path d="M252.0 144.3Q247.2 131.8 246.4 131.3A3.0 3.0 0 0 0 241.6 134.7Q241.8 135.6 252.0 144.3Z" fill="#735ABF"/><path d="M327 230Q333 232 339.5 229.3Q339 233 333 234.7Q328 234 327 230Z" fill="#735ABF"/><path d="M365.0 64.0Q359.0 71.5 366.0 78.0Q372.0 70.5 365.0 64.0Z" fill="#718715"/><path d="M385.0 66.0Q377.1 68.7 380.0 76.5Q387.9 73.8 385.0 66.0Z" fill="#718715"/><path d="M347.0 82.0Q353.7 90.8 363.7 86.0Q357.0 77.2 347.0 82.0Z" fill="#718715"/><path d="M405.7 78.0Q394.2 74.2 387.7 84.5Q399.2 88.3 405.7 78.0Z" fill="#718715"/><path d="M349.5 103.0Q359.5 105.7 363.0 96.0Q353.0 93.3 349.5 103.0Z" fill="#718715"/><path d="M363.0 117.0Q372.7 113.8 370.0 104.0Q360.3 107.2 363.0 117.0Z" fill="#718715"/><path d="M390.0 114.7Q392.7 104.7 383.0 101.0Q380.3 111.0 390.0 114.7Z" fill="#718715"/><path d="M402.0 102.7Q400.5 93.3 391.0 94.0Q392.5 103.4 402.0 102.7Z" fill="#718715"/><path d="M371.0 86.2Q370.2 78.9 368.9 78.4A4.3 4.3 0 0 0 363.1 84.6Q363.7 85.8 371.0 86.2Z" fill="#735ABF"/><path d="M378.0 86.2Q385.9 85.5 386.6 84.3A4.5 4.5 0 0 0 380.4 77.7Q379.1 78.3 378.0 86.2Z" fill="#735ABF"/><ellipse cx="367.0" cy="100.0" rx="4.8" ry="3.8" transform="rotate(-20 367.0 100.0)" fill="#735ABF"/><ellipse cx="386.5" cy="98.5" rx="4.8" ry="3.4" transform="rotate(15 386.5 98.5)" fill="#735ABF"/><path d="M533.5 114.0Q519.7 122.2 533.5 130.5Q543.7 122.2 533.5 114.0Z" fill="#735ABF"/><path d="M510.5 134.0Q519.3 142.7 527.5 133.5Q518.7 124.8 510.5 134.0Z" fill="#735ABF"/><path d="M552.0 135.5Q544.6 125.3 536.5 135.0Q543.9 145.2 552.0 135.5Z" fill="#735ABF"/><path d="M532.0 156.5Q542.2 148.5 532.0 140.5Q518.2 148.5 532.0 156.5Z" fill="#735ABF"/><path d="M527.0 103.0Q521.6 112.3 530.0 119.0Q535.4 109.7 527.0 103.0Z" fill="#718715"/><path d="M550.0 105.0Q538.9 108.4 539.0 120.0Q550.1 116.6 550.0 105.0Z" fill="#718715"/><path d="M504.0 117.0Q506.7 128.0 518.0 128.0Q515.3 117.0 504.0 117.0Z" fill="#718715"/><path d="M565.0 126.0Q554.3 122.0 548.7 132.0Q559.4 136.0 565.0 126.0Z" fill="#718715"/><path d="M504.0 148.0Q515.1 148.7 518.0 138.0Q506.9 137.3 504.0 148.0Z" fill="#718715"/><path d="M561.5 148.0Q557.6 138.2 547.4 141.0Q551.3 150.8 561.5 148.0Z" fill="#718715"/><path d="M516.0 162.8Q526.7 160.0 526.0 149.0Q515.3 151.8 516.0 162.8Z" fill="#718715"/><path d="M547.0 164.0Q548.5 152.9 538.0 149.0Q536.5 160.1 547.0 164.0Z" fill="#718715"/><path d="M520 63.8A13.5 7.7 0 0 0 547 63.8Z" fill="#718715"/><ellipse cx="539.5" cy="63.8" rx="4" ry="2" fill="#000"/><path d="M426.0 207.5Q431.5 217.1 433.1 227.2L432.3 229.1L428.1 223.2L425.6 230.0L424.3 228.3Q423.2 218.2 426.0 207.5Z" fill="#718715"/><circle cx="425.5" cy="206.5" r="0.9" fill="#718715"/><path d="M441.4 202.7Q445.5 213.7 445.1 224.4L443.8 226.2L440.4 219.4L436.2 225.8L435.2 223.8Q436.1 213.1 441.4 202.7Z" fill="#718715"/><path d="M469.0 210.7Q464.9 221.5 457.4 228.6L455.2 228.9L457.1 221.4L449.5 222.5L450.0 220.4Q457.8 213.7 469.0 210.7Z" fill="#718715"/><path d="M486.5 237.0Q477.8 245.1 468.1 246.8L466.2 245.4L471.4 239.1L464.7 234.5L466.2 232.6Q475.9 231.6 486.5 237.0Z" fill="#718715"/><path d="M484.0 266.5Q472.7 262.8 464.9 255.6L464.4 253.4L472.1 254.9L470.3 247.3L472.5 247.7Q480.0 255.3 484.0 266.5Z" fill="#718715"/><path d="M428.6 231.5Q431.5 239.2 439.7 239.5Q436.8 231.8 428.6 231.5Z" fill="#735ABF"/><path d="M459.5 225.5Q446.4 227.3 446.0 240.5Q459.1 238.7 459.5 225.5Z" fill="#735ABF"/><path d="M451.6 248.0Q458.8 253.7 467.0 249.5Q459.8 243.8 451.6 248.0Z" fill="#735ABF"/><path d="M586.0 263.0Q585.8 251.6 574.7 249.0Q574.9 260.4 586.0 263.0Z" fill="#718715"/><ellipse cx="584.5" cy="251.0" rx="2.0" ry="2.0" transform="rotate(0 584.5 251.0)" fill="#735ABF"/><ellipse cx="568.9" cy="262.4" rx="5.9" ry="2.6" transform="rotate(5 568.9 262.4)" fill="#735ABF"/><path d="M567.0 271.5Q555.5 276.1 555.5 288.5Q567.0 283.9 567.0 271.5Z" fill="#718715"/><path d="M563.0 286.4Q555.0 301.8 563.0 317.2Q571.0 301.8 563.0 286.4Z" fill="#718715"/><ellipse cx="552.3" cy="284.2" rx="2.2" ry="2.0" transform="rotate(0 552.3 284.2)" fill="#735ABF"/><ellipse cx="549.7" cy="293.8" rx="3.7" ry="3.2" transform="rotate(-30 549.7 293.8)" fill="#735ABF"/><ellipse cx="556.6" cy="301.0" rx="1.8" ry="4.0" transform="rotate(15 556.6 301.0)" fill="#735ABF"/><path d="M514.0 329.3Q496.2 334.7 496.0 353.3Q513.8 347.9 514.0 329.3Z" fill="#718715"/><ellipse cx="481.5" cy="348.0" rx="1.3" ry="3.5" transform="rotate(0 481.5 348.0)" fill="#735ABF"/><ellipse cx="488.0" cy="354.5" rx="2.5" ry="7.0" transform="rotate(25 488.0 354.5)" fill="#735ABF"/><path d="M488.8 367.0Q502.0 368.3 509.0 357.0Q495.8 355.7 488.8 367.0Z" fill="#735ABF"/><path d="M533.7 363.0Q520.2 353.5 506.0 362.0Q519.5 371.5 533.7 363.0Z" fill="#718715"/><path d="M491.7 372.0Q502.9 378.7 513.4 371.0Q502.3 366.7 491.7 372.0Z" fill="#735ABF"/><path d="M507.6 378.0Q510.3 393.3 525.0 398.0Q522.3 382.7 507.6 378.0Z" fill="#718715"/><path d="M483 383.5A24.5 24.5 0 0 1 483 432.5L483 428.5A17 20.5 0 0 0 483 387.5Z" fill="#735ABF"/><ellipse cx="517.6" cy="404.6" rx="1.3" ry="2.2" transform="rotate(0 517.6 404.6)" fill="#735ABF"/><ellipse cx="525.0" cy="409.7" rx="4.3" ry="2.9" transform="rotate(-25 525.0 409.7)" fill="#735ABF"/><ellipse cx="521.3" cy="419.0" rx="2.2" ry="3.8" transform="rotate(-30 521.3 419.0)" fill="#735ABF"/><path d="M506.0 440.0Q521.2 444.6 531.0 432.0Q515.8 427.4 506.0 440.0Z" fill="#718715"/><path d="M529 434.5Q536 428.5 540 432.5Q542.5 437.5 538.5 440Q534.5 441 533.5 437.5Q534 435 536.5 435.5" stroke="#718715" stroke-width="1.5" fill="none"/><path d="M493.0 443.0Q499.6 455.7 513.4 452.0Q506.8 439.3 493.0 443.0Z" fill="#735ABF"/><path d="M481 457Q486 449 492 448L490 457Z" fill="#735ABF"/><path d="M529 457Q531 451.5 535 451.5Q539 452 539 457" stroke="#718715" stroke-width="1.5" fill="none"/><ellipse cx="44.5" cy="455.0" rx="0.1" ry="0.1" transform="rotate(0 44.5 455.0)" fill="#735ABF"/><path d="M586 85L583.5 88.5L586 90Z" fill="#735ABF"/><circle cx="348.7" cy="426.4" r="1.5" fill="none" stroke="#D0D0D0" stroke-width="1.3"/><path d="M550.5 380.0Q547.4 387.0 554.5 390.0Q557.6 383.0 550.5 380.0Z" fill="#718715"/><path d="M569.5 381.0Q561.8 382.3 563.0 390.0Q570.7 388.7 569.5 381.0Z" fill="#718715"/><path d="M539.7 393.5Q540.8 400.8 547.9 398.8Q546.8 391.5 539.7 393.5Z" fill="#718715"/><path d="M579.0 393.0Q572.0 389.9 569.0 397.0Q576.0 400.1 579.0 393.0Z" fill="#718715"/><path d="M544.2 411.0Q551.5 411.2 550.6 404.0Q543.3 403.8 544.2 411.0Z" fill="#718715"/><path d="M554.0 417.6Q561.8 415.9 559.0 408.5Q551.2 410.2 554.0 417.6Z" fill="#718715"/><path d="M573.5 412.0Q573.2 403.2 564.4 403.0Q564.7 411.8 573.5 412.0Z" fill="#718715"/><ellipse cx="551.6" cy="393.7" rx="4.0" ry="3.0" transform="rotate(30 551.6 393.7)" fill="#735ABF"/><ellipse cx="564.8" cy="394.2" rx="4.3" ry="3.0" transform="rotate(-30 564.8 394.2)" fill="#735ABF"/><ellipse cx="550.6" cy="400.7" rx="3.8" ry="2.3" transform="rotate(-15 550.6 400.7)" fill="#735ABF"/><ellipse cx="560.8" cy="406.2" rx="2.8" ry="3.4" transform="rotate(0 560.8 406.2)" fill="#735ABF"/><path d="M558.9 424.0Q559.6 427.9 563.5 427.7Q562.8 423.8 558.9 424.0Z" fill="#718715"/><path d="M573.5 420.4Q569.4 422.3 569.9 426.8Q574.0 424.9 573.5 420.4Z" fill="#718715"/><path d="M555.2 433.0Q558.2 435.3 560.7 432.4Q557.7 430.1 555.2 433.0Z" fill="#718715"/><path d="M580.9 425.9Q577.3 424.3 575.4 427.7Q579.0 429.3 580.9 425.9Z" fill="#718715"/><path d="M558.9 443.3Q563.3 443.0 564.4 438.7Q560.0 439.0 558.9 443.3Z" fill="#718715"/><path d="M570.5 445.0Q573.8 443.0 572.0 439.6Q568.7 441.6 570.5 445.0Z" fill="#718715"/><path d="M580.0 440.5Q580.0 436.8 576.3 436.8Q576.3 440.5 580.0 440.5Z" fill="#718715"/><ellipse cx="568.0" cy="427.7" rx="1.9" ry="1.9" transform="rotate(0 568.0 427.7)" fill="#735ABF"/><ellipse cx="563.4" cy="430.5" rx="1.9" ry="1.7" transform="rotate(0 563.4 430.5)" fill="#735ABF"/><ellipse cx="572.6" cy="428.6" rx="1.9" ry="1.7" transform="rotate(-30 572.6 428.6)" fill="#735ABF"/><ellipse cx="574.5" cy="434.1" rx="2.8" ry="1.1" transform="rotate(0 574.5 434.1)" fill="#735ABF"/><ellipse cx="567.6" cy="438.3" rx="2.3" ry="2.3" transform="rotate(0 567.6 438.3)" fill="#735ABF"/></g></svg><!--/ART-->
<!--SC--><svg class="abs" style="left:0;top:0" width="600" height="470">
 <rect x="586" y="64" width="10" height="392.5" fill="#F5F4EF"/>
 <rect x="587" y="64.8" width="8.2" height="8.5" rx="1" fill="#C6D6FA" stroke="#B2C6F2" stroke-width="0.6"/>
 <path d="M589 70.5L591.1 68.3L593.2 70.5" stroke="#4D6185" stroke-width="1.1" fill="none"/>
 <rect x="586.8" y="100" width="8.6" height="173" rx="1" fill="#C3D5FC" stroke="#B0C5F5" stroke-width="0.6"/>
 <rect x="586.8" y="447" width="8.6" height="9" rx="1" fill="#C6D6FA" stroke="#B2C6F2" stroke-width="0.6"/>
 <path d="M589 450.5L591.1 452.7L593.2 450.5" stroke="#4D6185" stroke-width="1.1" fill="none"/>
 <rect x="42.5" y="456.5" width="544" height="9.8" fill="#F5F4EF"/>
 <rect x="43.3" y="457.8" width="9.4" height="7.6" rx="1" fill="#C6D6FA" stroke="#B2C6F2" stroke-width="0.6"/>
 <path d="M49 459.5L46.8 461.6L49 463.7" stroke="#4D6185" stroke-width="1.1" fill="none"/>
 <rect x="124" y="457.8" width="338" height="7.8" rx="1" fill="#C3D5FC" stroke="#B0C5F5" stroke-width="0.6"/>
 <rect x="291.5" y="459.5" width="4" height="4" fill="none" stroke="#AFC3EE" stroke-width="0.6"/>
 <rect x="577" y="457.8" width="9" height="7.5" rx="1" fill="#C6D6FA" stroke="#B2C6F2" stroke-width="0.6"/>
 <path d="M580.5 459.5L582.7 461.6L580.5 463.7" stroke="#4D6185" stroke-width="1.1" fill="none"/>
 <rect x="586" y="456.5" width="10" height="10" fill="#ECE9D8"/>
 <rect x="42" y="466.3" width="554" height="1" fill="#8DA2B6"/>
 <rect x="42" y="467.3" width="554" height="2.7" fill="#6F8CA8"/>
 <rect x="305" y="466.8" width="28" height="3.2" fill="#C5D3DC"/>
 <path d="M317.5 468L319 469.5L320.5 468Z" fill="#fff"/>
</svg>
<!--/SC-->
<div class="abs" id="vbarR"></div>
</body></html>
